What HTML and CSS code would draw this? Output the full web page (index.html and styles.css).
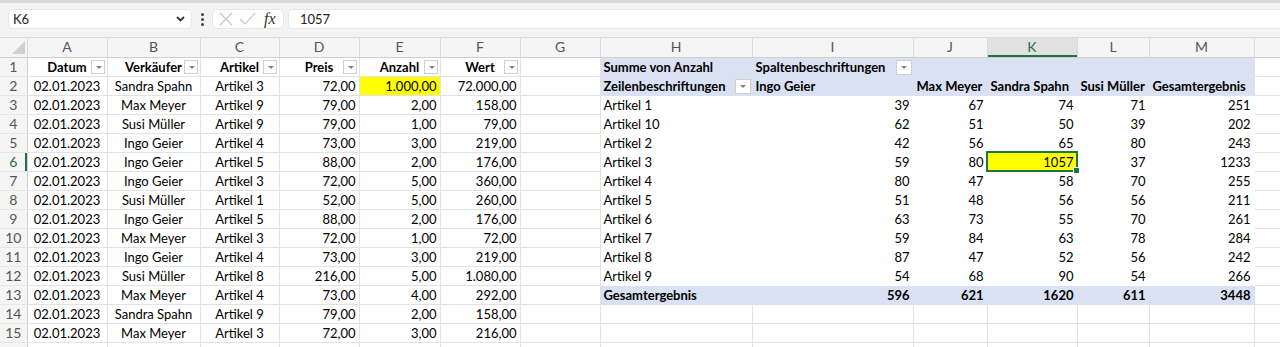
FILE: index.html
```
<!DOCTYPE html>
<html lang="de">
<head>
	<meta charset="UTF-8">
	<title>Mappe1</title>
	<link rel="stylesheet" href="styles.css">
</head>
<body>
	<div class="topline"></div>
	<div class="fbar">
		<div class="namebox">
			<span>K6</span>
			<svg width="9" height="6" viewBox="0 0 9 6"><path d="M1 1 L4.5 4.5 L8 1" fill="none" stroke="#333" stroke-width="1.8"/></svg>
		</div>
		<div class="dots"><i></i><i></i><i></i></div>
		<div class="fxbox">
			<svg width="14" height="14" viewBox="0 0 14 14"><path d="M1 1 L13 13 M13 1 L1 13" stroke="#c4c4c4" stroke-width="1.1"/></svg>
			<svg width="17" height="14" viewBox="0 0 17 14"><path d="M1 7 L6 12 L16 1" fill="none" stroke="#c4c4c4" stroke-width="1.1"/></svg>
			<span class="fx">fx</span>
		</div>
		<div class="formula">1057</div>
	</div>

	<div class="sheet">
		<table>
			<colgroup>
				<col style="width:27px"><col style="width:80px"><col style="width:93px"><col style="width:79px">
				<col style="width:80px"><col style="width:81px"><col style="width:80px"><col style="width:80px">
				<col style="width:152px"><col style="width:161px"><col style="width:74px"><col style="width:90px">
				<col style="width:72px"><col style="width:105px"><col style="width:80px">
			</colgroup>
			<tr class="colhead">
				<th class="corner"><span class="tri"></span></th>
				<th>A</th><th>B</th><th>C</th><th>D</th><th>E</th><th>F</th><th>G</th>
				<th>H</th><th>I</th><th>J</th><th class="on">K</th><th>L</th><th>M</th><th></th>
			</tr>
			<tr>
				<th class="rh">1</th>
				<td class="c b">Datum<i class="fb"></i></td>
				<td class="c b">Verkäufer<i class="fb"></i></td>
				<td class="c b">Artikel<i class="fb"></i></td>
				<td class="c b">Preis<i class="fb"></i></td>
				<td class="c b">Anzahl<i class="fb"></i></td>
				<td class="c b">Wert<i class="fb"></i></td>
				<td></td>
				<td class="pv ph b">Summe von Anzahl</td>
				<td class="pv ph b">Spaltenbeschriftungen<i class="fb pfb"></i></td>
				<td class="pv ph"></td><td class="pv ph"></td><td class="pv ph"></td><td class="pv ph"></td>
				<td></td>
			</tr>
			<tr>
				<th class="rh">2</th>
				<td class="c">02.01.2023</td><td class="c">Sandra Spahn</td><td class="c">Artikel 3</td>
				<td class="r">72,00</td><td class="r y">1.000,00</td><td class="r">72.000,00</td><td></td>
				<td class="pv ph b">Zeilenbeschriftungen<i class="fb pfb"></i></td>
				<td class="pv ph b">Ingo Geier</td><td class="pv ph b">Max Meyer</td><td class="pv ph b">Sandra Spahn</td>
				<td class="pv ph b">Susi Müller</td><td class="pv ph b">Gesamtergebnis</td>
				<td></td>
			</tr>
			<tr>
				<th class="rh">3</th>
				<td class="c">02.01.2023</td><td class="c">Max Meyer</td><td class="c">Artikel 9</td>
				<td class="r">79,00</td><td class="r">2,00</td><td class="r">158,00</td><td></td>
				<td class="pv">Artikel 1</td><td class="pv r">39</td><td class="pv r">67</td><td class="pv r">74</td><td class="pv r">71</td><td class="pv r">251</td>
				<td></td>
			</tr>
			<tr>
				<th class="rh">4</th>
				<td class="c">02.01.2023</td><td class="c">Susi Müller</td><td class="c">Artikel 9</td>
				<td class="r">79,00</td><td class="r">1,00</td><td class="r">79,00</td><td></td>
				<td class="pv">Artikel 10</td><td class="pv r">62</td><td class="pv r">51</td><td class="pv r">50</td><td class="pv r">39</td><td class="pv r">202</td>
				<td></td>
			</tr>
			<tr>
				<th class="rh">5</th>
				<td class="c">02.01.2023</td><td class="c">Ingo Geier</td><td class="c">Artikel 4</td>
				<td class="r">73,00</td><td class="r">3,00</td><td class="r">219,00</td><td></td>
				<td class="pv">Artikel 2</td><td class="pv r">42</td><td class="pv r">56</td><td class="pv r">65</td><td class="pv r">80</td><td class="pv r">243</td>
				<td></td>
			</tr>
			<tr>
				<th class="rh on">6</th>
				<td class="c">02.01.2023</td><td class="c">Ingo Geier</td><td class="c">Artikel 5</td>
				<td class="r">88,00</td><td class="r">2,00</td><td class="r">176,00</td><td></td>
				<td class="pv">Artikel 3</td><td class="pv r">59</td><td class="pv r">80</td><td class="pv r y sel">1057</td><td class="pv r">37</td><td class="pv r">1233</td>
				<td></td>
			</tr>
			<tr>
				<th class="rh">7</th>
				<td class="c">02.01.2023</td><td class="c">Ingo Geier</td><td class="c">Artikel 3</td>
				<td class="r">72,00</td><td class="r">5,00</td><td class="r">360,00</td><td></td>
				<td class="pv">Artikel 4</td><td class="pv r">80</td><td class="pv r">47</td><td class="pv r">58</td><td class="pv r">70</td><td class="pv r">255</td>
				<td></td>
			</tr>
			<tr>
				<th class="rh">8</th>
				<td class="c">02.01.2023</td><td class="c">Susi Müller</td><td class="c">Artikel 1</td>
				<td class="r">52,00</td><td class="r">5,00</td><td class="r">260,00</td><td></td>
				<td class="pv">Artikel 5</td><td class="pv r">51</td><td class="pv r">48</td><td class="pv r">56</td><td class="pv r">56</td><td class="pv r">211</td>
				<td></td>
			</tr>
			<tr>
				<th class="rh">9</th>
				<td class="c">02.01.2023</td><td class="c">Ingo Geier</td><td class="c">Artikel 5</td>
				<td class="r">88,00</td><td class="r">2,00</td><td class="r">176,00</td><td></td>
				<td class="pv">Artikel 6</td><td class="pv r">63</td><td class="pv r">73</td><td class="pv r">55</td><td class="pv r">70</td><td class="pv r">261</td>
				<td></td>
			</tr>
			<tr>
				<th class="rh">10</th>
				<td class="c">02.01.2023</td><td class="c">Max Meyer</td><td class="c">Artikel 3</td>
				<td class="r">72,00</td><td class="r">1,00</td><td class="r">72,00</td><td></td>
				<td class="pv">Artikel 7</td><td class="pv r">59</td><td class="pv r">84</td><td class="pv r">63</td><td class="pv r">78</td><td class="pv r">284</td>
				<td></td>
			</tr>
			<tr>
				<th class="rh">11</th>
				<td class="c">02.01.2023</td><td class="c">Ingo Geier</td><td class="c">Artikel 4</td>
				<td class="r">73,00</td><td class="r">3,00</td><td class="r">219,00</td><td></td>
				<td class="pv">Artikel 8</td><td class="pv r">87</td><td class="pv r">47</td><td class="pv r">52</td><td class="pv r">56</td><td class="pv r">242</td>
				<td></td>
			</tr>
			<tr>
				<th class="rh">12</th>
				<td class="c">02.01.2023</td><td class="c">Susi Müller</td><td class="c">Artikel 8</td>
				<td class="r">216,00</td><td class="r">5,00</td><td class="r">1.080,00</td><td></td>
				<td class="pv">Artikel 9</td><td class="pv r">54</td><td class="pv r">68</td><td class="pv r">90</td><td class="pv r">54</td><td class="pv r">266</td>
				<td></td>
			</tr>
			<tr>
				<th class="rh">13</th>
				<td class="c">02.01.2023</td><td class="c">Max Meyer</td><td class="c">Artikel 4</td>
				<td class="r">73,00</td><td class="r">4,00</td><td class="r">292,00</td><td></td>
				<td class="pv pt b">Gesamtergebnis</td><td class="pv pt r b">596</td><td class="pv pt r b">621</td><td class="pv pt r b">1620</td><td class="pv pt r b">611</td><td class="pv pt r b">3448</td>
				<td></td>
			</tr>
			<tr>
				<th class="rh">14</th>
				<td class="c">02.01.2023</td><td class="c">Sandra Spahn</td><td class="c">Artikel 9</td>
				<td class="r">79,00</td><td class="r">2,00</td><td class="r">158,00</td><td></td>
				<td></td><td></td><td></td><td></td><td></td><td></td><td></td>
			</tr>
			<tr>
				<th class="rh">15</th>
				<td class="c">02.01.2023</td><td class="c">Max Meyer</td><td class="c">Artikel 3</td>
				<td class="r">72,00</td><td class="r">3,00</td><td class="r">216,00</td><td></td>
				<td></td><td></td><td></td><td></td><td></td><td></td><td></td>
			</tr>
			<tr>
				<th class="rh">16</th>
				<td class="c">02.01.2023</td><td class="c">Sandra Spahn</td><td class="c">Artikel 1</td>
				<td class="r">72,00</td><td class="r">4,00</td><td class="r">288,00</td><td></td>
				<td></td><td></td><td></td><td></td><td></td><td></td><td></td>
			</tr>
		</table>
	</div>
</body>
</html>
```
FILE: styles.css
```
body{
	margin: 0;
	font-family: Lato, "Liberation Sans", sans-serif;
	background: #fff;
	color: #000;
	overflow: hidden;
}
.topline{
	height: 3px;
	background: #d9d9d9;
}
.fbar{
	height: 35px;
	box-sizing: border-box;
	background: #f3f3f3;
	display: flex;
	align-items: flex-start;
	padding: 6px 0 0 8px;
	border-bottom: 1px solid #dcdcdc;
}
.namebox,.fxbox,.formula{
	height: 20px;
	box-sizing: border-box;
	background: #fff;
	border: 1px solid #e6e6e6;
	border-radius: 5px;
	display: flex;
	align-items: center;
	font-size: 13px;
	color: #222;
}
.namebox{
	width: 184px;
	justify-content: space-between;
	padding: 0 6px 0 4px;
}
.dots{
	width: 20px;
	display: flex;
	flex-direction: column;
	align-items: center;
	gap: 2px;
	padding-top: 4px;
}
.dots i{
	width: 3px;
	height: 3px;
	border-radius: 2px;
	background: #444;
}
.fxbox{
	width: 72px;
	padding: 0 4px 0 6px;
	gap: 6px;
}
.fx{
	font-family: "Liberation Serif", serif;
	font-style: italic;
	font-size: 16px;
	color: #333;
	margin-left: 2px;
}
.formula{
	flex: 1;
	margin-left: 4px;
	padding-left: 11px;
	border-right: none;
	border-radius: 5px 0 0 5px;
}
.sheet{
	overflow: hidden;
	width: 1280px;
	height: 309px;
}
table{
	table-layout: fixed;
	width: 1334px;
	border-collapse: collapse;
}
th,td{
	height: 19px;
	padding: 0 3px;
	box-sizing: border-box;
	font-size: 13px;
	line-height: 18px;
	white-space: nowrap;
	overflow: hidden;
	position: relative;
	border-right: 1px solid #e2e2e2;
	border-bottom: 1px solid #e2e2e2;
	text-align: left;
}
.colhead th{
	background: #f5f5f5;
	font-weight: normal;
	color: #555;
	text-align: center;
	font-size: 14px;
	border-right: 1px solid #dadada;
	border-bottom: 1px solid #cfcfcf;
}
.colhead th.on{
	background: #e1e1e1;
	color: #217346;
	box-shadow: inset 0 -2px 0 #217346;
}
.corner .tri{
	position: absolute;
	right: 2px;
	bottom: 3px;
	width: 0;
	height: 0;
	border-left: 13px solid transparent;
	border-bottom: 13px solid #cfcfcf;
}
.rh{
	background: #f5f5f5;
	font-weight: normal;
	color: #555;
	font-size: 14px;
	text-align: center;
	padding: 0 2px;
	border-right: 1px solid #cfcfcf;
	border-bottom: 1px solid #e6e6e6;
}
.rh.on{
	color: #217346;
	box-shadow: inset -2px 0 0 #217346;
}
.c{
	text-align: center;
}
.r{
	text-align: right;
}
.b{
	font-weight: bold;
}
.y{
	background: #ffff00;
}
.fb{
	position: absolute;
	right: 2px;
	top: 2px;
	width: 14px;
	height: 14px;
	box-sizing: border-box;
	background: #fff;
	border: 1px solid #cfcfcf;
}
.fb:after{
	content: "";
	position: absolute;
	left: 4px;
	top: 5px;
	border-left: 3px solid transparent;
	border-right: 3px solid transparent;
	border-top: 3px solid #808080;
}
.pfb{
	right: 1px;
	width: 16px;
	height: 15px;
}
.pv{
	border-right-color: #fff;
	border-bottom-color: #fff;
	padding: 0 3px 0 3px;
}
.ph{
	background: #d9e1f2;
	border-right-color: #d9e1f2;
	border-bottom-color: #d9e1f2;
}
.pt{
	background: #d9e1f2;
	border-right-color: #d9e1f2;
	border-bottom-color: #d9e1f2;
	border-top: 1px solid #b4c6e7;
}
.sel{
	overflow: visible;
	outline: 2px solid #217346;
	outline-offset: -1px;
	background: #ffff00;
}
.sel:after{
	content: "";
	position: absolute;
	right: -3px;
	bottom: -3px;
	width: 5px;
	height: 5px;
	background: #217346;
	border: 1px solid #fff;
}
```
